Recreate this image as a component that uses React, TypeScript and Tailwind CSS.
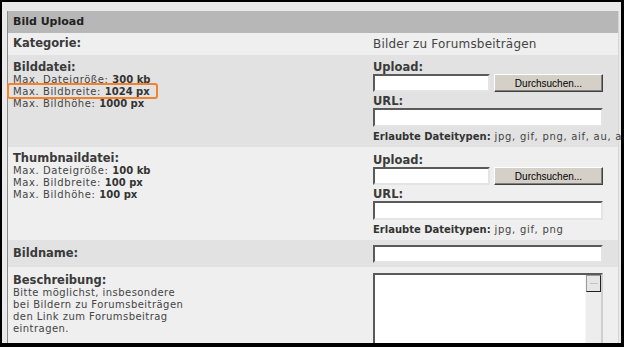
const inputCls =
  "block h-[18px] bg-white border-2 border-t-[#5a5a5a] border-l-[#5a5a5a] border-b-[#e4e4e4] border-r-[#e4e4e4]";

function Small({ label, value }: { label: string; value: string }) {
  return (
    <div className="text-[10px] leading-[12px] whitespace-nowrap">
      <span className="tracking-[0.6px]">{label} </span>
      <b className="text-[#333]">{value}</b>
    </div>
  );
}

function FileInputs({ types }: { types: string }) {
  return (
    <div className="pt-[6px] w-[230px]">
      <div className="text-[11.5px] leading-[13px] font-bold text-[#3a3a3a]">Upload:</div>
      <div className="flex gap-[4px]">
        <input className={inputCls + " w-[117px]"} />
        <button className="w-[109px] h-[18px] bg-[#d4d0c8] border border-t-white border-l-white border-b-[#404040] border-r-[#404040] shadow-[inset_-1px_-1px_0_#808080] text-[10px] font-['Liberation_Sans',sans-serif] text-black">
          Durchsuchen...
        </button>
      </div>
      <div className="mt-[3px] text-[11.5px] leading-[13px] font-bold text-[#3a3a3a]">URL:</div>
      <input className={inputCls + " w-[230px] h-[19px]"} />
      <div className="mt-[3px] text-[10px] leading-[14px] whitespace-nowrap">
        <b className="text-[#333]">Erlaubte Dateitypen:</b>
        <span className="tracking-[0.7px]"> {types}</span>
      </div>
    </div>
  );
}

export default function App() {
  return (
    <div className="w-[624px] h-[347px] overflow-hidden border-black border-t-2 border-l-2 border-r-[3px] border-b-4 bg-[#e9e9e9] font-['DejaVu_Sans',sans-serif] text-[#444]">
      <div className="pt-[9px] pl-[5px] pr-[2px]">
        <div className="relative border-l border-l-[#8a8a8a] border-r border-r-[#d6d6d6]">
          <div className="h-[22px] bg-[#b7b7b7] pl-[5px] flex items-center text-[11px] font-bold text-[#222]">
            Bild Upload
          </div>

          {/* Kategorie */}
          <div className="grid grid-cols-[365px_1fr] h-[22px] bg-[#efefef] items-center">
            <div className="pl-[5px] text-[11.5px] font-bold text-[#3a3a3a]">Kategorie:</div>
            <div className="text-[12px] tracking-[0.2px]">Bilder zu Forumsbeiträgen</div>
          </div>

          {/* Bilddatei */}
          <div className="grid grid-cols-[365px_1fr] h-[92px] bg-[#e2e2e2]">
            <div className="pl-[5px] pt-[5px]">
              <div className="text-[11.5px] leading-[14px] font-bold text-[#3a3a3a]">Bilddatei:</div>
              <Small label="Max. Dateigröße:" value="300 kb" />
              <Small label="Max. Bildbreite:" value="1024 px" />
              <Small label="Max. Bildhöhe:" value="1000 px" />
            </div>
            <FileInputs types="jpg, gif, png, aif, au, avi, mov, mp3" />
          </div>

          {/* Thumbnaildatei */}
          <div className="grid grid-cols-[365px_1fr] h-[93px] bg-[#efefef]">
            <div className="pl-[5px] pt-[4px]">
              <div className="text-[11.5px] leading-[14px] font-bold text-[#3a3a3a]">Thumbnaildatei:</div>
              <Small label="Max. Dateigröße:" value="100 kb" />
              <Small label="Max. Bildbreite:" value="100 px" />
              <Small label="Max. Bildhöhe:" value="100 px" />
            </div>
            <div className="pt-[1px]">
              <FileInputs types="jpg, gif, png" />
            </div>
          </div>

          {/* Bildname */}
          <div className="grid grid-cols-[365px_1fr] h-[27px] bg-[#e2e2e2] items-center">
            <div className="pl-[5px] text-[11.5px] font-bold text-[#3a3a3a]">Bildname:</div>
            <input className={inputCls + " w-[230px]"} />
          </div>

          {/* Beschreibung */}
          <div className="grid grid-cols-[365px_1fr] h-[90px] bg-[#efefef]">
            <div className="pl-[5px] pt-[6px]">
              <div className="text-[11.5px] leading-[14px] font-bold text-[#3a3a3a]">Beschreibung:</div>
              <div className="text-[10px] leading-[12px] tracking-[0.45px]">
                Bitte möglichst, insbesondere
                <br />
                bei Bildern zu Forumsbeiträgen
                <br />
                den Link zum Forumsbeitrag
                <br />
                eintragen.
              </div>
            </div>
            <div className="pt-[6px]">
              <div className="flex w-[230px] h-[90px] bg-white border-2 border-t-[#5a5a5a] border-l-[#5a5a5a] border-b-[#e4e4e4] border-r-[#cfcfcf]">
                <div className="flex-1" />
                <div className="w-[16px] bg-[#ededed] border-l border-l-[#f6f6f6]">
                  <div className="h-[17px] bg-[#e6e6e6] border border-t-[#9a9a9a] border-l-[#9a9a9a] border-b-[#222] border-r-[#222] flex items-center justify-center">
                    <div className="w-[8px] h-[1px] bg-[#c4c4c4]" />
                  </div>
                </div>
              </div>
            </div>
          </div>

          {/* highlight */}
          <div className="absolute left-[-1px] top-[72px] w-[151px] h-[16px] border-2 border-[#f2822c] rounded-[3px]" />
        </div>
      </div>
    </div>
  );
}
